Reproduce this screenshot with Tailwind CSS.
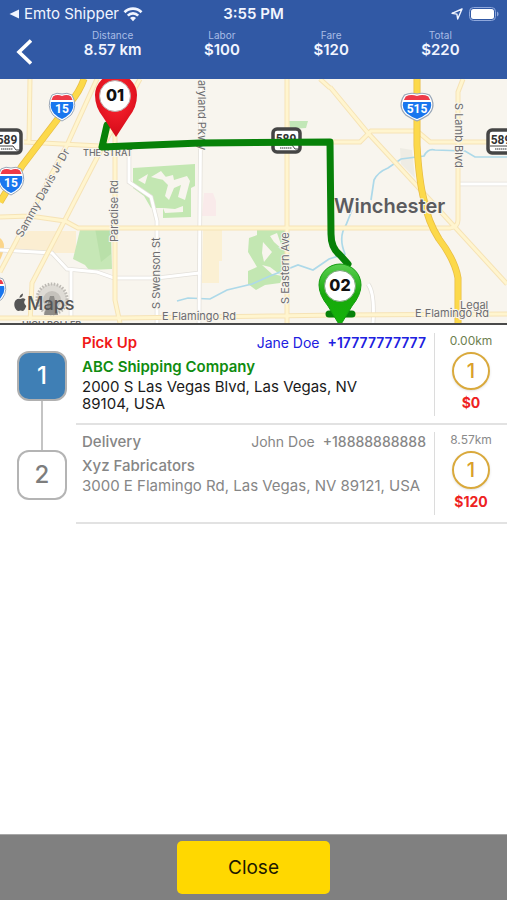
<!DOCTYPE html>
<html lang="en">
<head>
    <meta charset="UTF-8" />
    <meta name="viewport" content="width=device-width, initial-scale=1.0" />
    <title>Emto Shipper - Route</title>
    <script src="https://cdn.jsdelivr.net/npm/@tailwindcss/browser@4"></script>
</head>
<body class="min-h-screen flex flex-col bg-white font-['Inter',sans-serif] text-[15px] leading-[18px]">

    <!-- Header -->
    <header class="bg-[#3159a5] text-[#f1f5ff] h-[79px]">
        <div class="grid grid-cols-3 items-center h-7 px-2">
            <div class="flex items-center gap-1 whitespace-nowrap">
                <svg class="w-3 h-3" viewBox="0 0 12 12" fill="currentColor"><path d="M11 1.500v9L1.500 6z" /></svg>
                <span class="text-[15px]">Emto Shipper</span>
                <svg class="w-5 h-4" viewBox="0 0 20 16" fill="none" stroke="currentColor" stroke-width="2.7">
                    <path d="M1.5 6.2a12 12 0 0 1 17 0" />
                    <path d="M4.8 9.6a7.4 7.4 0 0 1 10.4 0" />
                    <path d="M10 15.2l-3-3.1a4.3 4.3 0 0 1 6 0z" fill="currentColor" stroke="none" />
                </svg>
            </div>
            <div class="text-center text-[15px] font-semibold">3:55 PM</div>
            <div class="flex items-center justify-end gap-1">
                <svg class="w-3 h-3" viewBox="0 0 12 12" fill="none" stroke="currentColor" stroke-width="1.4" stroke-linejoin="round"><path d="M11 1L1 5.3l4.9.8.8 4.9z" /></svg>
                <svg class="w-8 h-4" viewBox="0 0 32 16">
                    <rect x="2.5" y="1.5" width="26" height="13" rx="4" fill="none" stroke="#8fa8dc" />
                    <rect x="4" y="3" width="23" height="10" rx="2.5" fill="#fff" />
                    <path d="M30 5.5v5q1.6-.8 1.6-2.5t-1.6-2.5z" fill="#8fa8dc" />
                </svg>
            </div>
        </div>
        <div class="flex items-start">
            <button type="button" aria-label="Back" class="w-[58px] h-12 pl-4">
                <svg class="w-4 h-7" viewBox="0 0 16 28" fill="none" stroke="#fff" stroke-width="3.6"><path d="M15 2.500L3 14l12 11.500" /></svg>
            </button>
            <dl class="flex-1 grid grid-cols-4 text-center pr-3">
                <div>
                    <dt class="text-[10px] leading-[14px] text-[#a9bde6]">Distance</dt>
                    <dd class="text-[15px] leading-4 font-semibold">8.57 km</dd>
                </div>
                <div>
                    <dt class="text-[10px] leading-[14px] text-[#a9bde6]">Labor</dt>
                    <dd class="text-[15px] leading-4 font-semibold">$100</dd>
                </div>
                <div>
                    <dt class="text-[10px] leading-[14px] text-[#a9bde6]">Fare</dt>
                    <dd class="text-[15px] leading-4 font-semibold">$120</dd>
                </div>
                <div>
                    <dt class="text-[10px] leading-[14px] text-[#a9bde6]">Total</dt>
                    <dd class="text-[15px] leading-4 font-semibold">$220</dd>
                </div>
            </dl>
        </div>
    </header>

    <!-- Map -->
    <div class="border-b-2 border-[#4a4a4a]">
        <svg class="block w-full h-[244px]" viewBox="0 79 507 244" preserveAspectRatio="xMidYMid slice" role="img" aria-label="Route map">
            <defs>
                <radialGradient id="redPin" cx="50%" cy="35%" r="65%"><stop offset="0.3" stop-color="#f5202c" /><stop offset="1" stop-color="#d30a18" /></radialGradient>
                <linearGradient id="greenPin" x1="0" y1="0" x2="0" y2="1"><stop offset="0" stop-color="#5ad050" /><stop offset="0.5" stop-color="#18a80c" /><stop offset="1" stop-color="#14b508" /></linearGradient>
                <g id="interstate">
                    <path d="M-10-12Q-5-15 0-13Q5-15 10-12Q16-1 9 8Q4 12 0 14Q-4 12-9 8Q-16-1-10-12z" fill="#fff" stroke="#9aa7b8" />
                    <path d="M-9-10.5Q-5-13 0-11Q5-13 9-10.5L10.5-7H-10.5z" fill="#ee3a48" />
                    <path d="M-11-5H11Q12.5 1 8 6.5Q4 10.5 0 12Q-4 10.5-8 6.5Q-12.5 1-11-5z" fill="#1976ee" />
                </g>
                <g id="route589">
                    <rect x="-13" y="-11" width="27" height="23" rx="4" fill="#fff" stroke="#454545" stroke-width="3.5" />
                    <path d="M-11 5H6l3 4h3" fill="none" stroke="#454545" />
                    <path d="M-6 8H6" stroke="#777" stroke-width="1.5" stroke-dasharray="1.5 .5" />
                    <text y="3" text-anchor="middle" font-size="12" font-weight="700" fill="#333" font-family="Roboto">589</text>
                </g>
                <path id="minorRoads" d="M0 250l52 3 15 16 30 3 17 6h43l42-5h2M71 270v53M129 148v34l22 15 6 24v102M201 79l-2 244M368 284q7 9 5 39M458 184h49" />
                <path id="mainRoads" d="M30 79l-1 63M24 142l76 4M97 79L67 145 0 272M140 79l-38 69-34 66-36 69-2 40M115 130v170l5 23M287 79v244M0 217l30-1 35 5 13 7h372q8-1 8-8V92l5-13M320 79l10 9M330 87l38 46 62 67 77 84M332 142h28l11-11h46l13 11h77M0 318h120l220-3 167-1" />
                <path id="highways" d="M84 79q-4 12-14 24L22 166 0 202M417 79v66q2 36 7 55 4 22 15 39 16 21 19 39v45" />
            </defs>
            <rect y="60" width="507" height="290" fill="#f8f5ee" />

            <!-- land areas -->
            <path d="M28 231h48v22l-26 0-38-4z" fill="#fbeed2" />
            <path d="M0 238q8 6 0 22z" fill="#fbd58a" />
            <path d="M203 228h19v33h-3v22h-17z" fill="#fbf0d3" />
            <path d="M204 193h9l3 8v15h-14z" fill="#f9eaea" />
            <path d="M400 148l12 2 3 28-14-14z" fill="#eeece4" />
            <path d="M80 230l31-1 1 40-23 1-4-5-12-6z" fill="#c6e7b6" />
            <path d="M95 228h16v26l-10 8z" fill="#b9e0a9" />
            <path d="M133 168l62-4v22l-4 2v29l-28 1v-10h-12l-7-12-11-8z" fill="#c3e7b2" />
            <path d="M138 180l10-6-3 10zM151 177l10-6 8 10-10-2zM161 178l12-3 1 5 13-4 3 5-5 19-7-3 3-12-7 3-5 12-4-4 3-11zM163 208l12 1 8-3v6l-18 1z" fill="#f8f5ee" />
            <path d="M289 121h19l-2 7-16 1z" fill="#c2e7b7" />
            <path d="M257 230h28v43l-5 10-15 2-9 5-8-6v-13l9-4-9-15 1-14 8-3z" fill="#c3e7b2" />
            <path d="M263 242l9 10-8 10-2-9zM270 236l7-3 6 17-9-8zM262 265l8 2 12 9-10-2z" fill="#f8f5ee" />

            <!-- water -->
            <path d="M177 301l11-3 22 1 17-9 25-6 18-8 28-11 15 5 16-11 16-5q-7-17 1-29l6-15M371 200l3-20q4-8 14-12l13-9 23-3q4-8 11-6l30 1 10 6h43" fill="none" stroke="#add9e9" stroke-width="1.7" />

            <!-- roads -->
            <g fill="none">
                <use href="#minorRoads" stroke="#e3e0da" stroke-width="4.5" />
                <use href="#minorRoads" stroke="#fff" stroke-width="3" />
                <use href="#mainRoads" stroke="#f6e3b6" stroke-width="5" />
                <use href="#mainRoads" stroke="#fff5cf" stroke-width="3" />
                <use href="#highways" stroke="#e8bd45" stroke-width="7" />
                <use href="#highways" stroke="#fcd94a" stroke-width="5.5" />
            </g>

            <use href="#interstate" transform="translate(62 107)" />
            <use href="#interstate" transform="translate(11 181)" />
            <use href="#interstate" transform="translate(-7 291)" />
            <use href="#interstate" transform="translate(417 107) scale(1.25 1)" />
            <g font-family="Roboto" font-weight="700" font-size="12" fill="#fff" text-anchor="middle">
                <text x="62" y="113">15</text>
                <text x="11" y="187">15</text>
                <text x="417" y="113">515</text>
            </g>
            <use href="#route589" transform="translate(7 141)" />
            <use href="#route589" transform="translate(286 140)" />
            <use href="#route589" transform="translate(501 141)" />

            <!-- ferris wheel landmark -->
            <circle cx="52" cy="299" r="15" fill="#dedbd5" stroke="#bdbab4" stroke-width="3" stroke-dasharray="1.5 1.5" />
            <circle cx="52" cy="300" r="9" fill="#c5c2bc" />
            <path d="M50 296h4l4 19H44z" fill="#8f8d89" />

            <!-- street names -->
            <g font-family="Inter" font-size="11" fill="#6d6d70" stroke="#f8f5ee" stroke-width="2" paint-order="stroke">
                <text x="83" y="156" font-size="9" font-weight="500">THE STRAT</text>
                <text transform="translate(22 238) rotate(-61)">Sammy Davis Jr Dr</text>
                <text transform="translate(118 242) rotate(-90)">Paradise Rd</text>
                <text transform="translate(160 309) rotate(-90)">S Swenson St</text>
                <text transform="translate(289 304) rotate(-90)">S Eastern Ave</text>
                <text transform="translate(198 70) rotate(90)">Maryland Pkwy</text>
                <text transform="translate(455 103) rotate(90)">S Lamb Blvd</text>
                <text x="162" y="320">E Flamingo Rd</text>
                <text x="415" y="317">E Flamingo Rd</text>
                <text x="22" y="328" font-size="9" font-weight="600">HIGH ROLLER</text>
                <text x="460" y="309">Legal</text>
                <text x="334" y="213" font-size="20" font-weight="600" fill="#5b5b5e">Winchester</text>
            </g>

            <!-- provider mark -->
            <path d="M20.500 299q3-1.500 5 .5-3 3 .8 6.500-1.800 5-3.800 5l-2-.6-2 .6c-2.500 0-5-4.500-4-8.500q1.500-4.500 6-3.500zM19.500 298q0-3.500 3.500-4.500.2 3.500-3.500 4.500z" fill="#555" />
            <text x="27" y="310" font-family="Inter" font-size="18" font-weight="500" fill="#555">Maps</text>

            <!-- route -->
            <path d="M107 125l-5 22 98-4 130-1 1 92q0 14 9 21l8 9M329 314h23" fill="none" stroke="#078108" stroke-width="7" stroke-linecap="round" stroke-linejoin="round" />

            <!-- pins -->
            <path d="M116 137l-13-20q-8-10-8-22a21 21 0 0 1 42 0q0 12-8 22z" fill="url(#redPin)" />
            <circle cx="115" cy="96" r="15.5" fill="#fff" stroke="#b9a5a5" />
            <path d="M340 326l-12-20q-9-11-9-21a21 21 0 0 1 42 0q0 10-9 21z" fill="url(#greenPin)" stroke="#159c10" />
            <circle cx="340" cy="286" r="15.5" fill="#fff" stroke="#78a578" />
            <g font-family="Inter" font-size="16" font-weight="800" fill="#111" text-anchor="middle">
                <text x="115" y="101">01</text>
                <text x="340" y="291">02</text>
            </g>
        </svg>
    </div>

    <!-- Stops -->
    <main class="flex-1 pt-px">
        <ol>
            <li class="flex h-[99px]">
                <div class="w-[76px] pt-[25px] pl-[17px] flex flex-col">
                    <div class="size-[50px] shrink-0 rounded-xl border-2 border-[#b0b0b0] bg-[#3f7fb5] text-white text-[24px] font-medium flex items-center justify-center">1</div>
                    <div class="w-[50px] flex-1 flex justify-center"><div class="w-[2px] bg-[#c4c4c4]"></div></div>
                </div>
                <div class="flex-1 flex border-b-2 border-[#e2e2e2]">
                    <div class="flex-1 pl-[6px] pr-2 pt-2">
                        <div class="flex justify-between">
                            <h2 class="font-semibold text-[#f01818]">Pick Up</h2>
                            <p class="flex gap-2 text-[14px] text-[#2020e0]">
                                <span>Jane Doe</span>
                                <a href="tel:+17777777777" class="font-semibold">+17777777777</a>
                            </p>
                        </div>
                        <p class="mt-[6px] font-semibold text-[#108c10]">ABC Shipping Company</p>
                        <p class="mt-[2px] max-w-[300px] leading-[17px] text-[#1a1a1a]">2000 S Las Vegas Blvd, Las Vegas, NV 89104, USA</p>
                    </div>
                    <div class="w-[73px] my-[7px] border-l border-[#dcdcdc] flex flex-col items-center">
                        <p class="text-[12px] leading-4 text-[#6e7f50]">0.00km</p>
                        <div class="mt-[3px] size-[38px] rounded-full border-2 border-[#d9a93c] shadow-sm text-[#d9a02c] text-[20px] font-medium flex items-center justify-center">1</div>
                        <p class="mt-[4px] text-[14px] font-bold text-[#ee2222]">$0</p>
                    </div>
                </div>
            </li>
            <li class="flex h-[99px]">
                <div class="w-[76px] pl-[17px] flex flex-col">
                    <div class="w-[50px] h-[25px] flex justify-center"><div class="w-[2px] bg-[#c4c4c4]"></div></div>
                    <div class="size-[50px] shrink-0 rounded-xl border-2 border-[#b4b4b4] bg-white text-[#7d7d7d] text-[24px] font-medium flex items-center justify-center">2</div>
                </div>
                <div class="flex-1 flex border-b-2 border-[#e2e2e2]">
                    <div class="flex-1 pl-[6px] pr-2 pt-2 text-[#868686]">
                        <div class="flex justify-between">
                            <h2 class="font-medium">Delivery</h2>
                            <p class="flex gap-2 text-[14px]">
                                <span>John Doe</span>
                                <a href="tel:+18888888888" class="font-medium">+18888888888</a>
                            </p>
                        </div>
                        <p class="mt-[6px] font-medium">Xyz Fabricators</p>
                        <p class="mt-[2px] leading-[17px]">3000 E Flamingo Rd, Las Vegas, NV 89121, USA</p>
                    </div>
                    <div class="w-[73px] my-[7px] border-l border-[#dcdcdc] flex flex-col items-center">
                        <p class="text-[12px] leading-4 text-[#8a8a8a]">8.57km</p>
                        <div class="mt-[3px] size-[38px] rounded-full border-2 border-[#d9a93c] shadow-sm text-[#d9a02c] text-[20px] font-medium flex items-center justify-center">1</div>
                        <p class="mt-[4px] text-[14px] font-bold text-[#ee2222]">$120</p>
                    </div>
                </div>
            </li>
        </ol>
    </main>

    <footer class="bg-[#808080] border-t border-[#a8a8a8] pt-[6px] pb-[6px] flex justify-center">
        <button type="button" class="w-[153px] h-[53px] rounded-[5px] bg-[#ffd800] text-[#1c1800] text-[19px]">Close</button>
    </footer>
</body>
</html>
